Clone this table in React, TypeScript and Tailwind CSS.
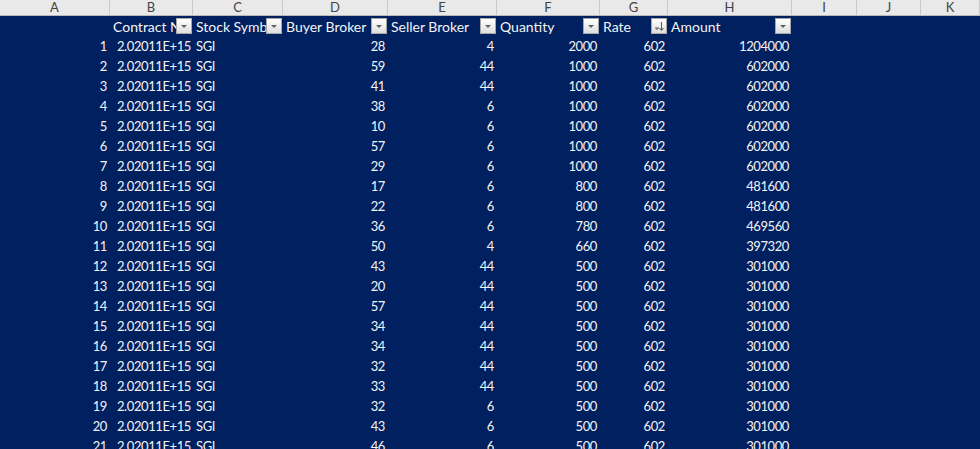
const letters = ['A', 'B', 'C', 'D', 'E', 'F', 'G', 'H', 'I', 'J', 'K'];

const headers = [
  { label: '', filter: false },
  { label: 'Contract No', filter: true },
  { label: 'Stock Symbol', filter: true },
  { label: 'Buyer Broker', filter: true },
  { label: 'Seller Broker', filter: true },
  { label: 'Quantity', filter: true },
  { label: 'Rate', filter: true, sorted: true },
  { label: 'Amount', filter: true },
];

// buyer, seller, quantity, rate, amount
const rows: [number, number, number, number, number][] = [
  [28, 4, 2000, 602, 1204000],
  [59, 44, 1000, 602, 602000],
  [41, 44, 1000, 602, 602000],
  [38, 6, 1000, 602, 602000],
  [10, 6, 1000, 602, 602000],
  [57, 6, 1000, 602, 602000],
  [29, 6, 1000, 602, 602000],
  [17, 6, 800, 602, 481600],
  [22, 6, 800, 602, 481600],
  [36, 6, 780, 602, 469560],
  [50, 4, 660, 602, 397320],
  [43, 44, 500, 602, 301000],
  [20, 44, 500, 602, 301000],
  [57, 44, 500, 602, 301000],
  [34, 44, 500, 602, 301000],
  [34, 44, 500, 602, 301000],
  [32, 44, 500, 602, 301000],
  [33, 44, 500, 602, 301000],
  [32, 6, 500, 602, 301000],
  [43, 6, 500, 602, 301000],
  [46, 6, 500, 602, 301000],
];

const grid =
  'grid grid-cols-[110px_83px_90px_105px_109px_103px_68px_124px_65px_64px_1fr]';

function FilterButton({ sorted }: { sorted?: boolean }) {
  return (
    <div className="absolute right-[1px] top-[2px] w-[16px] h-[16px] border border-[#a7a7a7] bg-gradient-to-b from-white to-[#dedede] flex items-center justify-center">
      {sorted ? (
        <svg width="12" height="12" viewBox="0 0 12 12">
          <path d="M2 8h4" stroke="#555" strokeWidth="1" />
          <path d="M3 9h2" stroke="#555" strokeWidth="1" />
          <path d="M8.5 2v8" stroke="#555" strokeWidth="1" />
          <path d="M6.5 8l2 2.5 2-2.5" stroke="#555" strokeWidth="1" fill="none" />
        </svg>
      ) : (
        <svg width="8" height="5" viewBox="0 0 8 5">
          <path d="M1 1h6l-3 3z" fill="#606060" />
        </svg>
      )}
    </div>
  );
}

export default function App() {
  return (
    <div className="w-[980px] h-[449px] overflow-hidden bg-[#002060] font-['Lato',sans-serif] text-[13px] leading-none">
      {/* column letters */}
      <div className={`${grid} h-[16px] bg-[#e9e9e9] border-b border-[#b8b8b8]`}>
        {letters.map((l) => (
          <div
            key={l}
            className="flex items-center justify-center border-r border-[#c9c9c9] text-[#444] text-[13px]"
          >
            {l}
          </div>
        ))}
      </div>

      {/* table header */}
      <div className={`${grid} h-[20px] text-[#f4f4f4] text-[14px]`}>
        {letters.map((l, i) => {
          const h = headers[i];
          return (
            <div key={l} className="relative overflow-hidden">
              {h && h.label && (
                <div className="h-full flex items-center pt-[1px] pl-[3px] whitespace-nowrap">{h.label}</div>
              )}
              {h && h.filter && <FilterButton sorted={h.sorted} />}
            </div>
          );
        })}
      </div>

      {/* data rows */}
      {rows.map((r, i) => (
        <div key={i} className={`${grid} h-[20px] pt-[1px] text-[#f4f4f4] tracking-[-0.4px]`}>
          <div className="flex items-center justify-end pr-[3px]">{i + 1}</div>
          <div className="flex items-center justify-end pr-[2px]">2.02011E+15</div>
          <div className="flex items-center pl-[3px]">SGI</div>
          <div className="flex items-center justify-end pr-[3px]">{r[0]}</div>
          <div className="flex items-center justify-end pr-[3px]">{r[1]}</div>
          <div className="flex items-center justify-end pr-[3px]">{r[2]}</div>
          <div className="flex items-center justify-end pr-[3px]">{r[3]}</div>
          <div className="flex items-center justify-end pr-[3px]">{r[4]}</div>
          <div />
          <div />
          <div />
        </div>
      ))}
    </div>
  );
}
